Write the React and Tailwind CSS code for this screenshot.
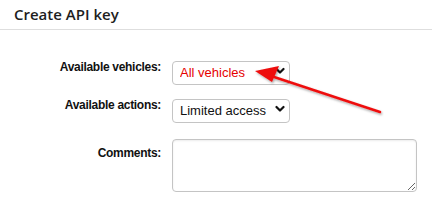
import React from "react";

const Chevron = () => (
  <svg width="10" height="8" viewBox="0 0 10 8" className="pointer-events-none absolute right-[5px] top-[8px]">
    <path d="M1.5 2 L5 5.5 L8.5 2" fill="none" stroke="#111" strokeWidth="2.2" strokeLinecap="round" strokeLinejoin="round" />
  </svg>
);

const Select = ({ value, red }) => (
  <div className="relative w-[118px] h-[24px]">
    <select
      defaultValue={value}
      className={`appearance-none w-full h-full rounded-[4px] border border-[#c4c4c4] bg-white pl-[7px] pr-[14px] text-[13px] font-['Liberation_Sans',Arial,sans-serif] outline-none ${red ? "text-[#e60000]" : "text-[#111]"}`}
    >
      <option>{value}</option>
    </select>
    <Chevron />
  </div>
);

const Label = ({ children }) => (
  <div className="w-[161px] shrink-0 text-right text-[12px] font-bold tracking-[-0.3px] text-[#111] font-['Liberation_Sans',Arial,sans-serif] leading-[14px]">
    {children}
  </div>
);

export default function App() {
  return (
    <div className="relative w-[432px] h-[206px] bg-white overflow-hidden">
      <div className="h-[30px] border-b border-[#dedede] pl-[14px] pt-[4px]">
        <h2 className="text-[15px] font-semibold text-[#1e1e1e] font-['Open_Sans',sans-serif] leading-[20px]">Create API key</h2>
      </div>

      <div className="flex flex-col pt-[29px]">
        <div className="flex items-start gap-[11px] h-[24px]">
          <div className="pt-[1px]">
            <Label>Available vehicles:</Label>
          </div>
          <Select value="All vehicles" red />
        </div>
        <div className="flex items-start gap-[11px] h-[24px] mt-[14px]">
          <div className="pt-[1px]">
            <Label>Available actions:</Label>
          </div>
          <Select value="Limited access" />
        </div>
        <div className="flex items-start gap-[11px] mt-[18px]">
          <div className="pt-[7px]">
            <Label>Comments:</Label>
          </div>
          <textarea className="w-[245px] h-[53px] rounded-[4px] border border-[#c4c4c4] bg-white shadow-[inset_0_1px_2px_rgba(0,0,0,0.08)] outline-none" />
        </div>
      </div>

      <svg className="pointer-events-none absolute left-0 top-0" width="432" height="206" viewBox="0 0 432 206">
        <defs>
          <filter id="sh" x="-10%" y="-10%" width="130%" height="130%">
            <feDropShadow dx="1" dy="1.5" stdDeviation="1" floodColor="#000" floodOpacity="0.35" />
          </filter>
        </defs>
        <g filter="url(#sh)">
          <line x1="380" y1="112" x2="262" y2="73" stroke="#ee1111" strokeWidth="2.5" strokeLinecap="round" />
          <path d="M255 71 L279 66 L272 82 Z" fill="#ee1111" />
        </g>
      </svg>
    </div>
  );
}
